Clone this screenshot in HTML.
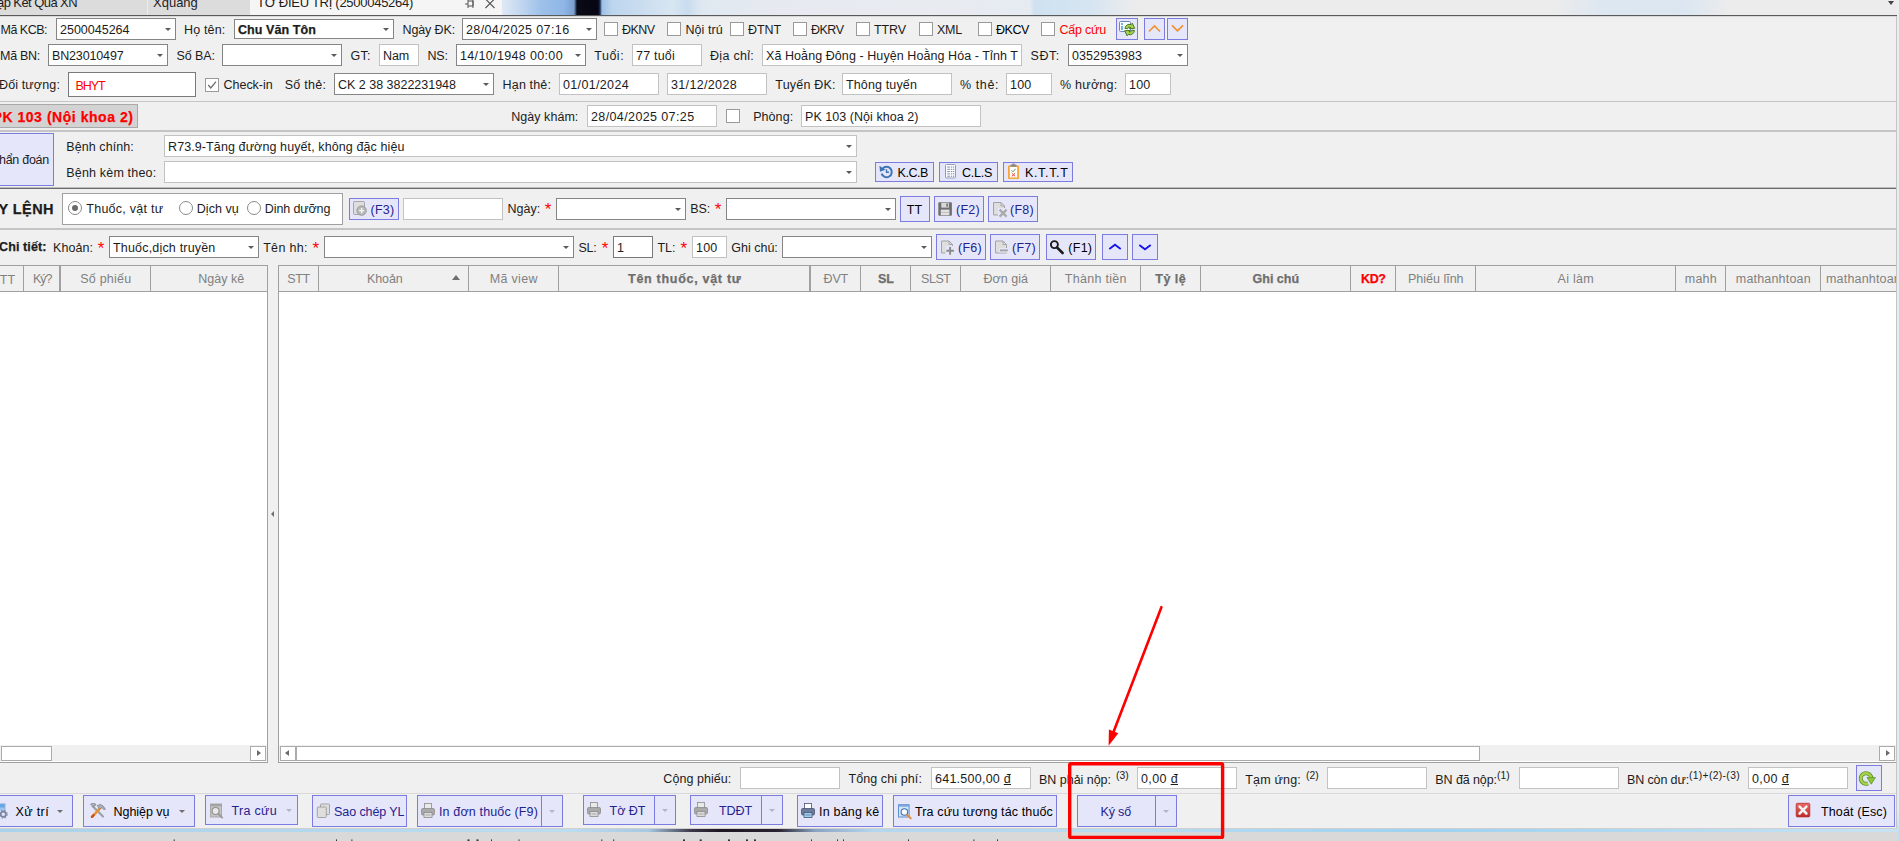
<!DOCTYPE html>
<html lang="vi"><head><meta charset="utf-8"><title>Tờ điều trị</title>
<style>
html,body{margin:0;padding:0}
body{width:1899px;height:841px;overflow:hidden;position:relative;background:#f0f0f0;font-family:"Liberation Sans",sans-serif;font-size:12.5px;color:#1c1c1c}
div,span,i,svg{position:absolute;box-sizing:content-box}
.t{line-height:16px;white-space:pre}
.cb{background:#fff;border:1px solid #858585;margin:0;width:0;height:0}
.cb,.tb,.ck,.bt,.rg,.pk,.gr,.sbt{box-sizing:border-box !important}
.cb.lt{border-color:#c2c2c2}
.tb{background:#fff;border:1px solid #c2c2c2}
.tb.dk{border-color:#7a7a7a}
.ck{background:#fff;border:1px solid #9a9a9a}
.bt{background:#e6e6fa;border:1px solid #7b7be0;box-sizing:content-box !important}
.rg{background:#fff;border:1px solid #a0a0a0;box-sizing:content-box !important}
.pk{background:#d3d3d3;border:1px solid #a9a9a9;box-sizing:content-box !important}
.gr{background:#fff;border:1px solid #a0a0a0;box-sizing:content-box !important}
.gh{background:#f0f0f0}
.sbt{background:#fff;border:1px solid #ababab;box-sizing:content-box !important}
.ar{width:0;height:0;border:3px solid transparent;border-top:3px solid #5a5a5a;border-bottom:0}
.ar.g{border-top-color:#b4b4c4}
.ar.m{border-top-color:#6e6e6e}
.rd{width:12px;height:12px;border:1px solid #8a8a8a;border-radius:50%;background:#fff}
.rd.on:after{content:"";position:absolute;left:3px;top:3px;width:6px;height:6px;border-radius:50%;background:#6a6a6a}
.tab{background:#dcdcdc}
.tab.act{background:#f5f5f5}
.ic{left:0;top:0}
#top{left:502px;top:0;width:1395px;height:15px;background:linear-gradient(90deg,#dfe9f5 0,#c3d8f0 18px,#9cc0ea 40px,#8fb6e6 62px,#7a9fd0 72px,#0a0a18 75px,#060612 96px,#1c2f5c 98px,#9fc0e6 100px,#bcd5ee 110px,#cfe0f0 150px,#d8e6f2 170px,#c9dcef 185px,#dfe8f1 200px,#e6eaf0 260px,#e8ebf0 430px,#e6ebf2 528px,#cfe1f0 532px,#d6e5f1 590px,#e9ebee 625px,#ececec 640px,#ececec 1050px,#dde7f1 1100px,#dbe6f1 1180px,#ececec 1230px)}
#bot0{left:0;top:828px;width:1897px;height:1px;background:#cfcfcf}
#bot1{left:0;top:829px;width:1897px;height:3px;background:linear-gradient(90deg,#a9d3ec 0,#bcdcf0 30%,#a6c8e2 34.2%,#3a3444 36.5%,#1c1622 38%,#2a2232 41%,#8aa4c4 43%,#b4d6ee 46%,#b9dcf2 60%,#9ed2f0 75%,#c8e2f2 100%)}
#bot2{left:0;top:832px;width:1899px;height:9px;background:#d9d9d9}
</style></head>
<body>
<div id="top"></div>
<div class="tab" style="left:0px;top:0px;width:147px;height:15px;"></div>
<div class="tab" style="left:147px;top:0px;width:103px;height:15px;border-left:1px solid #ececec;"></div>
<div class="tab act" style="left:250px;top:0px;width:252px;height:15px;"></div>
<span class="t" style="left:-3px;top:-5.5px;font-size:13px;letter-spacing:-0.573px;">ập Kết Quả XN</span>
<span class="t" style="left:153px;top:-5.5px;font-size:13px;">Xquang</span>
<span class="t" style="left:257px;top:-5.5px;font-size:13px;letter-spacing:-0.277px;">TỜ ĐIỀU TRỊ (2500045264)</span>
<svg style="position:absolute;left:463px;top:0" width="36" height="12" viewBox="0 0 36 12"><path d="M2 4h3M5 0v8M5 1h5v5h-5M10 0v8" fill="none" stroke="#555" stroke-width="1"/><path d="M22.5 -1 L31.5 8 M31.5 -1 L22.5 8" stroke="#555" stroke-width="1.1" fill="none"/></svg>
<i style="position:absolute;left:1888px;top:1px;border:3.5px solid transparent;border-top:4px solid #444;border-bottom:0;width:0;height:0"></i>
<div class="" style="left:0px;top:15px;width:1897px;height:1px;background:#5a5a5a;"></div>
<div class="" style="left:0px;top:16px;width:1897px;height:1px;background:#d8d8d8;"></div>
<span class="t" style="left:0.5px;top:21.5px;letter-spacing:-0.502px;">Mã KCB:</span>
<div class="cb" style="left:56px;top:18px;width:120px;height:22px;"></div>
<i class="ar" style="left:164.5px;top:28.0px"></i>
<span class="t" style="left:60px;top:21.5px;letter-spacing:-0.003px;">2500045264</span>
<span class="t" style="left:184px;top:21.5px;letter-spacing:0.170px;">Họ tên:</span>
<div class="cb" style="left:234px;top:19px;width:160px;height:20px;"></div>
<i class="ar" style="left:382.5px;top:28.0px"></i>
<span class="t" style="left:238px;top:21.5px;font-weight:bold;-webkit-text-stroke:.25px;letter-spacing:0.084px;">Chu Văn Tôn</span>
<span class="t" style="left:402.5px;top:21.5px;letter-spacing:-0.125px;">Ngày ĐK:</span>
<div class="cb" style="left:462px;top:18px;width:135px;height:22px;"></div>
<i class="ar" style="left:585.5px;top:28.0px"></i>
<span class="t" style="left:466px;top:21.5px;letter-spacing:0.386px;">28/04/2025 07:16</span>
<div class="ck" style="left:604px;top:22px;width:14px;height:14px;"></div>
<span class="t" style="left:622px;top:21.5px;letter-spacing:-0.559px;">ĐKNV</span>
<div class="ck" style="left:667px;top:22px;width:14px;height:14px;"></div>
<span class="t" style="left:685.4px;top:21.5px;letter-spacing:0.096px;">Nội trú</span>
<div class="ck" style="left:730px;top:22px;width:14px;height:14px;"></div>
<span class="t" style="left:748px;top:21.5px;letter-spacing:-0.082px;">ĐTNT</span>
<div class="ck" style="left:793px;top:22px;width:14px;height:14px;"></div>
<span class="t" style="left:811px;top:21.5px;letter-spacing:-0.504px;">ĐKRV</span>
<div class="ck" style="left:856px;top:22px;width:14px;height:14px;"></div>
<span class="t" style="left:874px;top:21.5px;letter-spacing:-0.105px;">TTRV</span>
<div class="ck" style="left:919px;top:22px;width:14px;height:14px;"></div>
<span class="t" style="left:937px;top:21.5px;letter-spacing:-0.234px;">XML</span>
<div class="ck" style="left:978px;top:22px;width:14px;height:14px;"></div>
<span class="t" style="left:996px;top:21.5px;color:#000;letter-spacing:-0.434px;">ĐKCV</span>
<div class="ck" style="left:1041px;top:22px;width:14px;height:14px;"></div>
<span class="t" style="left:1059.5px;top:21.5px;color:#f00;letter-spacing:-0.212px;">Cấp cứu</span>
<div class="bt" style="left:1116px;top:18px;width:20px;height:20px;"></div>
<svg style="left:1117px;top:19px" width="20" height="20" viewBox="1117 19 20 20"><rect x="1119.5" y="21.5" width="11" height="10" rx="1.2" fill="#fff" stroke="#6f88b8"/><rect x="1121" y="23" width="2" height="2" fill="#6db6e2"/><rect x="1121" y="26" width="2" height="4" fill="#6db6e2"/><path d="M1124.9 28.4 Q1126.3 23.2 1131.2 24.6 L1132.3 23.2 L1134.7 28.3 L1129.3 28.6 L1130.4 27.1 Q1128.2 26.3 1127.6 28.8 Z" fill="#a6d455" stroke="#3c6b0e" stroke-width=".9" stroke-linejoin="round"/><path d="M1124.9 28.4 Q1126.3 23.2 1131.2 24.6 L1132.3 23.2 L1134.7 28.3 L1129.3 28.6 L1130.4 27.1 Q1128.2 26.3 1127.6 28.8 Z" transform="rotate(180 1129.7 29.5)" fill="#a6d455" stroke="#3c6b0e" stroke-width=".9" stroke-linejoin="round"/></svg>
<div class="bt" style="left:1144px;top:18px;width:19px;height:20px;"><svg class="ic" width="19" height="20" viewBox="0 0 19 20"><path d="M4 12.5 L9.5 7 L15 12.5" fill="none" stroke="#f0922e" stroke-width="1.7"/></svg></div>
<div class="bt" style="left:1167px;top:18px;width:19px;height:20px;"><svg class="ic" width="19" height="20" viewBox="0 0 19 20"><path d="M4 6.3 L9.5 11.8 L15 6.3" fill="none" stroke="#f0922e" stroke-width="1.7"/></svg></div>
<span class="t" style="left:0px;top:47.5px;letter-spacing:-0.281px;">Mã BN:</span>
<div class="cb" style="left:48px;top:44px;width:120px;height:22px;"></div>
<i class="ar" style="left:156.5px;top:54.0px"></i>
<span class="t" style="left:52px;top:47.5px;letter-spacing:-0.148px;">BN23010497</span>
<span class="t" style="left:176.5px;top:47.5px;letter-spacing:-0.070px;">Số BA:</span>
<div class="cb" style="left:222px;top:44px;width:120px;height:22px;"></div>
<i class="ar" style="left:330.5px;top:54.0px"></i>
<span class="t" style="left:350.4px;top:47.5px;letter-spacing:0.349px;">GT:</span>
<div class="tb" style="left:379px;top:44px;width:40px;height:22px;"></div>
<span class="t" style="left:383px;top:47.5px;letter-spacing:-0.135px;">Nam</span>
<span class="t" style="left:427.4px;top:47.5px;letter-spacing:-0.115px;">NS:</span>
<div class="cb" style="left:456px;top:44px;width:130px;height:22px;"></div>
<i class="ar" style="left:574.5px;top:54.0px"></i>
<span class="t" style="left:460px;top:47.5px;letter-spacing:0.354px;">14/10/1948 00:00</span>
<span class="t" style="left:594.2px;top:47.5px;letter-spacing:0.534px;">Tuổi:</span>
<div class="tb" style="left:632px;top:44px;width:70px;height:22px;"></div>
<span class="t" style="left:636px;top:47.5px;letter-spacing:0.210px;">77 tuổi</span>
<span class="t" style="left:710px;top:47.5px;letter-spacing:0.289px;">Địa chỉ:</span>
<div class="tb" style="left:762px;top:44px;width:260px;height:22px;"></div>
<span class="t" style="left:766px;top:47.5px;letter-spacing:0.075px;">Xã Hoằng Đông - Huyện Hoằng Hóa - Tỉnh T</span>
<span class="t" style="left:1030.6px;top:47.5px;letter-spacing:0.477px;">SĐT:</span>
<div class="cb" style="left:1068px;top:44px;width:120px;height:22px;"></div>
<i class="ar" style="left:1176.5px;top:54.0px"></i>
<span class="t" style="left:1072px;top:47.5px;letter-spacing:0.047px;">0352953983</span>
<span class="t" style="left:-1px;top:77.0px;letter-spacing:0.134px;">Đối tượng:</span>
<div class="tb dk" style="left:68px;top:72px;width:128px;height:25px;"></div>
<span class="t" style="left:75.5px;top:78.0px;color:#f00;letter-spacing:-1.086px;">BHYT</span>
<div class="ck" style="left:205px;top:78px;width:14px;height:14px;"><svg width="12" height="12" viewBox="0 0 12 12" style="position:absolute;left:0;top:0"><path d="M2.2 6 L4.8 9 L10 2.6" fill="none" stroke="#6e6e6e" stroke-width="1.3"/></svg></div>
<span class="t" style="left:223.6px;top:77.0px;letter-spacing:-0.041px;">Check-in</span>
<span class="t" style="left:284.7px;top:77.0px;letter-spacing:0.268px;">Số thẻ:</span>
<div class="cb" style="left:334px;top:73px;width:160px;height:22px;"></div>
<i class="ar" style="left:482.5px;top:83.0px"></i>
<span class="t" style="left:338px;top:76.5px;letter-spacing:-0.010px;">CK 2 38 3822231948</span>
<span class="t" style="left:502.6px;top:77.0px;letter-spacing:0.154px;">Hạn thẻ:</span>
<div class="tb" style="left:559px;top:73px;width:100px;height:22px;"></div>
<span class="t" style="left:563px;top:76.5px;letter-spacing:0.344px;">01/01/2024</span>
<div class="tb" style="left:667px;top:73px;width:100px;height:22px;"></div>
<span class="t" style="left:671px;top:76.5px;letter-spacing:0.344px;">31/12/2028</span>
<span class="t" style="left:775.3px;top:77.0px;letter-spacing:0.212px;">Tuyến ĐK:</span>
<div class="tb" style="left:842px;top:73px;width:110px;height:22px;"></div>
<span class="t" style="left:846px;top:76.5px;letter-spacing:0.136px;">Thông tuyến</span>
<span class="t" style="left:960px;top:77.0px;letter-spacing:0.594px;">% thẻ:</span>
<div class="tb" style="left:1006px;top:73px;width:46px;height:22px;"></div>
<span class="t" style="left:1010px;top:76.5px;letter-spacing:0.214px;">100</span>
<span class="t" style="left:1060px;top:77.0px;letter-spacing:0.252px;">% hưởng:</span>
<div class="tb" style="left:1125px;top:73px;width:46px;height:22px;"></div>
<span class="t" style="left:1129px;top:76.5px;letter-spacing:0.214px;">100</span>
<div class="" style="left:0px;top:101px;width:1897px;height:1px;background:#c6c6c6;"></div>
<div class="pk" style="left:-1px;top:104px;width:137px;height:22px;"></div>
<span class="t" style="left:-7.5px;top:108.5px;color:#f00;font-weight:bold;-webkit-text-stroke:.25px;font-size:14px;letter-spacing:0.542px;">PK 103 (Nội khoa 2)</span>
<span class="t" style="left:511.2px;top:109.0px;letter-spacing:0.050px;">Ngày khám:</span>
<div class="tb" style="left:587px;top:105px;width:130px;height:22px;"></div>
<span class="t" style="left:591px;top:108.5px;letter-spacing:0.386px;">28/04/2025 07:25</span>
<div class="ck" style="left:726px;top:109px;width:14px;height:14px;"></div>
<span class="t" style="left:753.2px;top:109.0px;letter-spacing:0.062px;">Phòng:</span>
<div class="tb" style="left:801px;top:105px;width:180px;height:22px;"></div>
<span class="t" style="left:805px;top:108.5px;letter-spacing:0.049px;">PK 103 (Nội khoa 2)</span>
<div class="" style="left:0px;top:130px;width:1897px;height:2px;background:#c4c4c4;"></div>
<div class="bt" style="left:-1px;top:133px;width:53px;height:51px;"></div>
<span class="t" style="left:-1px;top:152.0px;letter-spacing:-0.268px;">hẩn đoán</span>
<span class="t" style="left:66.3px;top:138.5px;letter-spacing:0.071px;">Bệnh chính:</span>
<div class="cb lt" style="left:164px;top:135px;width:693px;height:22px;"></div>
<i class="ar" style="left:845.5px;top:145.0px"></i>
<span class="t" style="left:168px;top:138.5px;letter-spacing:0.100px;">R73.9-Tăng đường huyết, không đặc hiệu</span>
<span class="t" style="left:66.3px;top:165.0px;letter-spacing:0.174px;">Bệnh kèm theo:</span>
<div class="cb lt" style="left:164px;top:161px;width:693px;height:22px;"></div>
<i class="ar" style="left:845.5px;top:171.0px"></i>
<div class="bt" style="left:875px;top:162px;width:57px;height:18px;"></div>
<svg style="left:879px;top:164px" width="16" height="16" viewBox="879 164 16 16"><path d="M882.3 169 A5.2 5.2 0 1 1 881.6 173.6" fill="none" stroke="#3f73b3" stroke-width="2"/><path d="M879.4 165.8 L880 171.8 L885.4 169.8 Z" fill="#3f73b3"/><path d="M886.5 169.2 V172.3 H889" fill="none" stroke="#3f73b3" stroke-width="1.4"/></svg>
<span class="t" style="left:897.5px;top:164.5px;color:#000;letter-spacing:-0.431px;">K.C.B</span>
<div class="bt" style="left:939px;top:162px;width:57px;height:18px;"></div>
<svg style="left:944px;top:163px" width="14" height="17" viewBox="944 163 14 17"><rect x="945.5" y="164.5" width="10" height="13.5" rx="1" fill="#fff" stroke="#8f9ab8"/><rect x="947.2" y="166.5" width="3" height="1" fill="#7d8fb5"/><rect x="951.2" y="166.5" width="1" height="1" fill="#3b62c0"/><rect x="953.2" y="166.5" width="1" height="1" fill="#3b62c0"/><rect x="947.2" y="168.8" width="3" height="1" fill="#7d8fb5"/><rect x="951.2" y="168.8" width="1" height="1" fill="#3b62c0"/><rect x="953.2" y="168.8" width="1" height="1" fill="#3b62c0"/><rect x="947.2" y="171.1" width="3" height="1" fill="#7d8fb5"/><rect x="951.2" y="171.1" width="1" height="1" fill="#3b62c0"/><rect x="953.2" y="171.1" width="1" height="1" fill="#3b62c0"/><rect x="947.2" y="173.4" width="3" height="1" fill="#7d8fb5"/><rect x="951.2" y="173.4" width="1" height="1" fill="#3b62c0"/><rect x="953.2" y="173.4" width="1" height="1" fill="#3b62c0"/><rect x="947.2" y="175.7" width="3" height="1" fill="#7d8fb5"/><rect x="951.2" y="175.7" width="1" height="1" fill="#3b62c0"/><rect x="953.2" y="175.7" width="1" height="1" fill="#3b62c0"/></svg>
<span class="t" style="left:962px;top:164.5px;color:#000;letter-spacing:-0.253px;">C.L.S</span>
<div class="bt" style="left:1003px;top:162px;width:68px;height:18px;"></div>
<svg style="left:1007px;top:163px" width="14" height="17" viewBox="1007 163 14 17"><rect x="1008" y="165.5" width="11" height="13.5" rx=".8" fill="#f2a63c"/><rect x="1009.8" y="167" width="7.4" height="10.5" fill="#fff"/><rect x="1010.5" y="164.5" width="6" height="2.3" rx=".6" fill="#8a8a8a"/><rect x="1012.3" y="163.6" width="2.4" height="1.6" fill="#8a8a8a"/><path d="M1011.5 170.3 L1013 171.8 L1015.6 168.8" fill="none" stroke="#5aa05a" stroke-width="1"/><path d="M1011.8 173.2 L1015.2 176.4 M1015.2 173.2 L1011.8 176.4" stroke="#e0453a" stroke-width="1"/></svg>
<span class="t" style="left:1025px;top:164.5px;color:#000;letter-spacing:0.656px;">K.T.T.T</span>
<div class="" style="left:0px;top:187px;width:1897px;height:1px;background:#bdbdbd;"></div>
<div class="" style="left:0px;top:188px;width:1897px;height:1px;background:#6a6a6a;"></div>
<span class="t" style="left:-1.5px;top:201.0px;font-weight:bold;-webkit-text-stroke:.25px;font-size:14.5px;letter-spacing:0.430px;">Y LỆNH</span>
<div class="rg" style="left:62px;top:193px;width:279px;height:30px;"></div>
<i class="rd on" style="left:68px;top:201px"></i>
<span class="t" style="left:86.3px;top:200.8px;letter-spacing:0.255px;">Thuốc, vật tư</span>
<i class="rd" style="left:178.5px;top:201px"></i>
<span class="t" style="left:196.8px;top:200.8px;letter-spacing:0.045px;">Dịch vụ</span>
<i class="rd" style="left:246.7px;top:201px"></i>
<span class="t" style="left:264.8px;top:200.8px;letter-spacing:-0.111px;">Dinh dưỡng</span>
<div class="bt" style="left:349px;top:198px;width:48px;height:20px;"></div>
<svg style="left:352px;top:200px" width="16" height="18" viewBox="352 200 16 18"><rect x="353.5" y="201.5" width="11" height="13" rx=".8" fill="#dedede" stroke="#a6a6a6"/><circle cx="361.6" cy="210.6" r="4.7" fill="#b9b9b9" stroke="#999" stroke-width="1"/><path d="M359 210.6 H364.2 M361.6 208 V213.2" stroke="#f4f4f4" stroke-width="1.4"/></svg>
<span class="t" style="left:370.5px;top:201.5px;color:#23238e;letter-spacing:0.270px;">(F3)</span>
<div class="tb" style="left:403px;top:198px;width:100px;height:22px;"></div>
<span class="t" style="left:507.4px;top:200.8px;letter-spacing:0.069px;">Ngày:</span>
<span class="t" style="left:544.7px;top:202.1px;color:#f00;font-size:17px;">*</span>
<div class="cb" style="left:556px;top:198px;width:130px;height:22px;"></div>
<i class="ar" style="left:674.5px;top:208.0px"></i>
<span class="t" style="left:690.3px;top:200.8px;letter-spacing:-0.052px;">BS:</span>
<span class="t" style="left:714.7px;top:202.1px;color:#f00;font-size:17px;">*</span>
<div class="cb" style="left:726px;top:198px;width:170px;height:22px;"></div>
<i class="ar" style="left:884.5px;top:208.0px"></i>
<div class="bt" style="left:900px;top:196px;width:28px;height:24px;"></div>
<span class="t" style="left:906.7px;top:201.5px;color:#000;letter-spacing:0.109px;">TT</span>
<div class="bt" style="left:934px;top:196px;width:48px;height:24px;"></div>
<svg style="left:937px;top:201px" width="16" height="16" viewBox="937 201 16 16"><rect x="938.3" y="202.3" width="13.6" height="13.4" rx="1" fill="#6f6f6f"/><rect x="941.3" y="202.8" width="7.6" height="4.8" fill="#d9d9d9"/><rect x="946.3" y="203.5" width="1.6" height="3.2" fill="#6f6f6f"/><rect x="940.8" y="209.6" width="8.6" height="5.6" fill="#e1e1e1"/><rect x="940.8" y="212" width="8.6" height=".9" fill="#bdbdbd"/></svg>
<span class="t" style="left:956px;top:201.5px;color:#23238e;letter-spacing:0.270px;">(F2)</span>
<div class="bt" style="left:988px;top:196px;width:48px;height:24px;"></div>
<svg style="left:992px;top:201px" width="17" height="18" viewBox="992 201 17 18"><path d="M993.5 202.5 H1001.0 L1004.5 206.0 V215.0 H993.5 Z" fill="#dedede" stroke="#a3a3a3" stroke-width="1"/><path d="M1001.0 202.5 V206.0 H1004.5" fill="none" stroke="#a3a3a3" stroke-width=".9"/><rect x="998" y="208" width="10" height="10" fill="#e6e6fa"/><path d="M999.6 209.6 L1006.6 216.6 M1006.6 209.6 L999.6 216.6" stroke="#a9a9a9" stroke-width="2.2"/></svg>
<span class="t" style="left:1010px;top:201.5px;color:#23238e;letter-spacing:0.270px;">(F8)</span>
<div class="" style="left:0px;top:228px;width:1897px;height:2px;background:#c4c4c4;"></div>
<span class="t" style="left:-1px;top:239.0px;font-weight:bold;-webkit-text-stroke:.25px;letter-spacing:0.108px;">Chi tiết:</span>
<span class="t" style="left:53px;top:239.5px;letter-spacing:0.062px;">Khoản:</span>
<span class="t" style="left:97.7px;top:241.3px;color:#f00;font-size:17px;">*</span>
<div class="cb" style="left:109px;top:236px;width:150px;height:22px;"></div>
<i class="ar" style="left:247.5px;top:246.0px"></i>
<span class="t" style="left:113px;top:239.5px;letter-spacing:0.185px;">Thuốc,dịch truyền</span>
<span class="t" style="left:263.2px;top:239.5px;letter-spacing:0.301px;">Tên hh:</span>
<span class="t" style="left:312.5px;top:241.3px;color:#f00;font-size:17px;">*</span>
<div class="cb" style="left:324px;top:236px;width:250px;height:22px;"></div>
<i class="ar" style="left:562.5px;top:246.0px"></i>
<span class="t" style="left:578.4px;top:239.5px;letter-spacing:-0.255px;">SL:</span>
<span class="t" style="left:601.8px;top:241.3px;color:#f00;font-size:17px;">*</span>
<div class="tb dk" style="left:613px;top:236px;width:40px;height:22px;"></div>
<span class="t" style="left:617px;top:239.5px;">1</span>
<span class="t" style="left:657.4px;top:239.5px;letter-spacing:-0.021px;">TL:</span>
<span class="t" style="left:680.5px;top:241.3px;color:#f00;font-size:17px;">*</span>
<div class="tb" style="left:692px;top:236px;width:35px;height:22px;"></div>
<span class="t" style="left:696px;top:239.5px;letter-spacing:0.214px;">100</span>
<span class="t" style="left:731.3px;top:239.5px;letter-spacing:-0.008px;">Ghi chú:</span>
<div class="cb" style="left:782px;top:236px;width:150px;height:22px;"></div>
<i class="ar" style="left:920.5px;top:246.0px"></i>
<div class="bt" style="left:936px;top:234px;width:48px;height:24px;"></div>
<svg style="left:940px;top:239px" width="16" height="18" viewBox="940 239 16 18"><path d="M941.5 241 H949.0 L952.5 244.5 V253 H941.5 Z" fill="#dedede" stroke="#a3a3a3" stroke-width="1"/><path d="M949.0 241 V244.5 H952.5" fill="none" stroke="#a3a3a3" stroke-width=".9"/><rect x="945.4" y="246" width="9.5" height="9.5" fill="#e6e6fa"/><path d="M946.3 250.8 H953.9 M950.1 247 V254.7" stroke="#8c8c8c" stroke-width="1.9"/></svg>
<span class="t" style="left:958px;top:239.5px;color:#23238e;letter-spacing:0.270px;">(F6)</span>
<div class="bt" style="left:990px;top:234px;width:48px;height:24px;"></div>
<svg style="left:994px;top:239px" width="16" height="18" viewBox="994 239 16 18"><path d="M995.5 241 H1003.0 L1006.5 244.5 V253 H995.5 Z" fill="#dedede" stroke="#a3a3a3" stroke-width="1"/><path d="M1003.0 241 V244.5 H1006.5" fill="none" stroke="#a3a3a3" stroke-width=".9"/><rect x="999" y="248" width="9.5" height="4.5" fill="#e6e6fa"/><path d="M999.9 250.4 H1007.8" stroke="#a3a3a3" stroke-width="1.9"/></svg>
<span class="t" style="left:1012px;top:239.5px;color:#23238e;letter-spacing:0.270px;">(F7)</span>
<div class="bt" style="left:1046px;top:234px;width:48px;height:24px;"></div>
<svg style="left:1049px;top:239px" width="17" height="17" viewBox="1049 239 17 17"><circle cx="1054.4" cy="244.6" r="3.5" fill="#e6e6fa" stroke="#1a1a1a" stroke-width="1.9"/><path d="M1057.2 247.6 L1062.6 253" stroke="#1a1a1a" stroke-width="2.6" stroke-linecap="round"/></svg>
<span class="t" style="left:1068.3px;top:239.5px;color:#000;letter-spacing:0.270px;">(F1)</span>
<div class="bt" style="left:1102px;top:234px;width:24px;height:24px;"><svg class="ic" width="24" height="24" viewBox="0 0 24 24"><path d="M6.3 14 L12 9.7 L17.7 14" fill="none" stroke="#1414e6" stroke-width="1.8"/></svg></div>
<div class="bt" style="left:1132px;top:234px;width:24px;height:24px;"><svg class="ic" width="24" height="24" viewBox="0 0 24 24"><path d="M6.3 10 L12 14.3 L17.7 10" fill="none" stroke="#1414e6" stroke-width="1.8"/></svg></div>
<div class="gr" style="left:-1px;top:265px;width:267px;height:496px;"></div>
<div class="gh" style="left:0px;top:266px;width:267px;height:25px;"></div>
<div class="" style="left:0px;top:291px;width:267px;height:1px;background:#a0a0a0;"></div>
<div class="" style="left:23px;top:266px;width:1px;height:25px;background:#a0a0a0;"></div>
<span class="t" style="left:11.8px;top:271.0px;color:#808080;transform:translateX(-50%);"></span>
<div class="" style="left:60px;top:266px;width:1px;height:25px;background:#a0a0a0;"></div>
<div class="" style="left:59px;top:266px;width:1px;height:25px;background:#a0a0a0;"></div>
<span class="t" style="left:42.3px;top:271.0px;color:#808080;transform:translateX(-50%);letter-spacing:-1.016px;">Ký?</span>
<div class="" style="left:150px;top:266px;width:1px;height:25px;background:#a0a0a0;"></div>
<span class="t" style="left:105.8px;top:271.0px;color:#808080;transform:translateX(-50%);letter-spacing:0.205px;">Số phiếu</span>
<div class="" style="left:267px;top:266px;width:1px;height:25px;background:#a0a0a0;"></div>
<span class="t" style="left:221.3px;top:271.0px;color:#808080;transform:translateX(-50%);letter-spacing:0.020px;">Ngày kê</span>
<span class="t" style="left:-0.2px;top:271.5px;color:#808080;letter-spacing:0.109px;">TT</span>
<div class="gr" style="left:278px;top:265px;width:1617px;height:496px;"></div>
<div class="gh" style="left:279px;top:266px;width:1617px;height:25px;"></div>
<div class="" style="left:279px;top:291px;width:1617px;height:1px;background:#a0a0a0;"></div>
<div class="" style="left:318px;top:266px;width:1px;height:25px;background:#a0a0a0;"></div>
<span class="t" style="left:287.3px;top:271.0px;color:#808080;letter-spacing:-0.370px;">STT</span>
<div class="" style="left:468px;top:266px;width:1px;height:25px;background:#a0a0a0;"></div>
<span class="t" style="left:384.8px;top:271.0px;color:#808080;transform:translateX(-50%);letter-spacing:-0.131px;">Khoản</span>
<div class="" style="left:558px;top:266px;width:1px;height:25px;background:#a0a0a0;"></div>
<span class="t" style="left:513.8px;top:271.0px;color:#808080;transform:translateX(-50%);letter-spacing:0.308px;">Mã view</span>
<div class="" style="left:810px;top:266px;width:1px;height:25px;background:#a0a0a0;"></div>
<div class="" style="left:809px;top:266px;width:1px;height:25px;background:#a0a0a0;"></div>
<span class="t" style="left:684.8px;top:271.0px;color:#6e6e6e;font-weight:bold;-webkit-text-stroke:.25px;transform:translateX(-50%);letter-spacing:0.710px;">Tên thuốc, vật tư</span>
<div class="" style="left:860px;top:266px;width:1px;height:25px;background:#a0a0a0;"></div>
<span class="t" style="left:835.8px;top:271.0px;color:#808080;transform:translateX(-50%);letter-spacing:-0.167px;">ĐVT</span>
<div class="" style="left:910px;top:266px;width:1px;height:25px;background:#a0a0a0;"></div>
<span class="t" style="left:885.8px;top:271.0px;color:#6e6e6e;font-weight:bold;-webkit-text-stroke:.25px;transform:translateX(-50%);letter-spacing:-0.242px;">SL</span>
<div class="" style="left:960px;top:266px;width:1px;height:25px;background:#a0a0a0;"></div>
<span class="t" style="left:935.8px;top:271.0px;color:#808080;transform:translateX(-50%);letter-spacing:-0.441px;">SLST</span>
<div class="" style="left:1050px;top:266px;width:1px;height:25px;background:#a0a0a0;"></div>
<span class="t" style="left:1005.8px;top:271.0px;color:#808080;transform:translateX(-50%);letter-spacing:0.022px;">Đơn giá</span>
<div class="" style="left:1140px;top:266px;width:1px;height:25px;background:#a0a0a0;"></div>
<span class="t" style="left:1095.8px;top:271.0px;color:#808080;transform:translateX(-50%);letter-spacing:0.292px;">Thành tiền</span>
<div class="" style="left:1200px;top:266px;width:1px;height:25px;background:#a0a0a0;"></div>
<span class="t" style="left:1170.8px;top:271.0px;color:#6e6e6e;font-weight:bold;-webkit-text-stroke:.25px;transform:translateX(-50%);letter-spacing:0.500px;">Tỷ lệ</span>
<div class="" style="left:1350px;top:266px;width:1px;height:25px;background:#a0a0a0;"></div>
<span class="t" style="left:1275.8px;top:271.0px;color:#6e6e6e;font-weight:bold;-webkit-text-stroke:.25px;transform:translateX(-50%);letter-spacing:-0.004px;">Ghi chú</span>
<div class="" style="left:1395px;top:266px;width:1px;height:25px;background:#a0a0a0;"></div>
<span class="t" style="left:1373.3px;top:271.0px;color:#f00;font-weight:bold;-webkit-text-stroke:.25px;transform:translateX(-50%);letter-spacing:-0.401px;">KD?</span>
<div class="" style="left:1475px;top:266px;width:1px;height:25px;background:#a0a0a0;"></div>
<span class="t" style="left:1435.8px;top:271.0px;color:#808080;transform:translateX(-50%);letter-spacing:-0.011px;">Phiếu lĩnh</span>
<div class="" style="left:1675px;top:266px;width:1px;height:25px;background:#a0a0a0;"></div>
<span class="t" style="left:1575.8px;top:271.0px;color:#808080;transform:translateX(-50%);letter-spacing:0.294px;">Ai làm</span>
<div class="" style="left:1725px;top:266px;width:1px;height:25px;background:#a0a0a0;"></div>
<span class="t" style="left:1700.8px;top:271.0px;color:#808080;transform:translateX(-50%);letter-spacing:0.180px;">mahh</span>
<div class="" style="left:1820px;top:266px;width:1px;height:25px;background:#a0a0a0;"></div>
<span class="t" style="left:1773.3px;top:271.0px;color:#808080;transform:translateX(-50%);letter-spacing:0.183px;">mathanhtoan</span>
<div class="" style="left:1897px;top:266px;width:1px;height:25px;background:#a0a0a0;"></div>
<span class="t" style="left:1826px;top:271.0px;color:#808080;letter-spacing:0.183px;">mathanhtoan</span>
<i style="position:absolute;left:452px;top:275px;border:4.8px solid transparent;border-bottom:5px solid #6e6e6e;border-top:0;width:0;height:0"></i>
<i style="position:absolute;left:271px;top:511px;border:3px solid transparent;border-right:3.5px solid #6e6e6e;border-left:0;width:0;height:0"></i>
<div class="" style="left:0px;top:745px;width:267px;height:16px;background:#f0f0f0;"></div>
<div class="sbt" style="left:1px;top:746px;width:49px;height:13px;"></div>
<div class="sbt" style="left:250px;top:746px;width:14px;height:13px;"><i style="position:absolute;left:6px;top:3px;border:3.5px solid transparent;border-left:4px solid #6a6a6a;border-right:0;width:0;height:0"></i></div>
<div class="" style="left:279px;top:745px;width:1617px;height:16px;background:#f0f0f0;"></div>
<div class="sbt" style="left:280px;top:746px;width:14px;height:13px;"><i style="position:absolute;left:4px;top:3px;border:3.5px solid transparent;border-right:4px solid #6a6a6a;border-left:0;width:0;height:0"></i></div>
<div class="sbt" style="left:296px;top:746px;width:1182px;height:13px;"></div>
<div class="sbt" style="left:1879px;top:746px;width:14px;height:13px;"><i style="position:absolute;left:6px;top:3px;border:3.5px solid transparent;border-left:4px solid #6a6a6a;border-right:0;width:0;height:0"></i></div>
<span class="t" style="left:663.3px;top:771.0px;letter-spacing:0.053px;">Cộng phiếu:</span>
<div class="tb" style="left:740px;top:767px;width:100px;height:22px;"></div>
<span class="t" style="left:848.4px;top:771.0px;letter-spacing:0.103px;">Tổng chi phí:</span>
<div class="tb" style="left:931px;top:767px;width:100px;height:22px;"></div>
<span class="t" style="left:935px;top:770.5px;letter-spacing:0.250px;">641.500,00 <u>đ</u></span>
<span class="t" style="left:1039px;top:771.5px;letter-spacing:-0.023px;">BN phải nộp:</span>
<span class="t" style="left:1116px;top:767.5px;font-size:10.3px;">(3)</span>
<div class="tb" style="left:1137px;top:767px;width:100px;height:22px;"></div>
<span class="t" style="left:1141px;top:770.5px;letter-spacing:0.372px;">0,00 <u>đ</u></span>
<span class="t" style="left:1245.3px;top:771.5px;letter-spacing:0.185px;">Tạm ứng:</span>
<span class="t" style="left:1306px;top:767.5px;font-size:10.3px;">(2)</span>
<div class="tb" style="left:1327px;top:767px;width:100px;height:22px;"></div>
<span class="t" style="left:1435.3px;top:771.5px;letter-spacing:-0.085px;">BN đã nộp:</span>
<span class="t" style="left:1497px;top:767.5px;font-size:10.3px;">(1)</span>
<div class="tb" style="left:1519px;top:767px;width:100px;height:22px;"></div>
<span class="t" style="left:1627px;top:771.5px;letter-spacing:-0.127px;">BN còn dư:</span>
<span class="t" style="left:1689px;top:767.5px;font-size:10.3px;letter-spacing:0.345px;">(1)+(2)-(3)</span>
<div class="tb" style="left:1748px;top:767px;width:100px;height:22px;"></div>
<span class="t" style="left:1752px;top:770.5px;letter-spacing:0.372px;">0,00 <u>đ</u></span>
<div class="bt" style="left:1856px;top:765px;width:24px;height:24px;"></div>
<svg style="left:1857px;top:768px" width="20" height="20" viewBox="1857 768 20 20"><path d="M1871.3 778.6 A5.3 5.3 0 1 0 1868 783.4" fill="none" stroke="#5e9420" stroke-width="4"/><path d="M1871.3 778.6 A5.3 5.3 0 1 0 1868 783.4" fill="none" stroke="#a5d24f" stroke-width="2.4"/><path d="M1867 777.6 H1875.4 L1871.2 784.2 Z" fill="#8cc63f" stroke="#5e9420" stroke-width=".8"/></svg>
<div class="" style="left:0px;top:793px;width:1897px;height:1px;background:#d9d9d9;"></div>
<div class="bt" style="left:-1px;top:795px;width:72px;height:30px;"></div>
<svg style="left:0px;top:802px" width="9" height="17" viewBox="0 802 9 17"><rect x="-4" y="803.4" width="9.3" height="7" fill="#6aa6e6" stroke="#b9cde6" stroke-width="1"/><rect x="-4" y="807.5" width="8.6" height="2.6" fill="#9cc4ef"/><circle cx="3.3" cy="814.3" r="2.6" fill="none" stroke="#77849f" stroke-width="1.7"/><circle cx="3.3" cy="814.3" r="3.9" fill="none" stroke="#77849f" stroke-width="1.1" stroke-dasharray="1.5 1.6"/></svg>
<span class="t" style="left:15.5px;top:803.5px;color:#000;letter-spacing:0.367px;">Xử trí</span>
<i class="ar m" style="left:57px;top:810px"></i>
<div class="bt" style="left:83px;top:795px;width:110px;height:30px;"></div>
<svg style="left:89px;top:803px" width="18" height="16" viewBox="89 803 18 16"><path d="M92.5 806 L103 816.5" stroke="#9aa0a8" stroke-width="2.2" stroke-linecap="round"/><path d="M90.6 805.2 A3 3 0 0 1 95.4 804.6 L93.4 806.4 L94.2 807.6" fill="none" stroke="#8d939b" stroke-width="1.4"/><path d="M92 816.8 L100 808.4" stroke="#e8912d" stroke-width="2.4" stroke-linecap="round"/><path d="M92 816.8 L93.6 815.2" stroke="#c8541c" stroke-width="2.4" stroke-linecap="round"/><path d="M97.2 805.6 L100.2 804.4 Q103.5 805.2 105.4 809.2 L103.8 809.6 Q102.6 807.6 101 807.8 L99.6 809.2 Z" fill="#aab0b8" stroke="#777c84" stroke-width=".7"/></svg>
<span class="t" style="left:113.5px;top:803.5px;color:#000;letter-spacing:-0.033px;">Nghiệp vụ</span>
<i class="ar m" style="left:179px;top:810px"></i>
<div class="bt" style="left:205px;top:795px;width:91px;height:28px;"></div>
<svg style="left:209px;top:802px" width="16" height="18" viewBox="209 802 16 18"><rect x="210.5" y="804" width="11" height="13" fill="#c4c4c4" stroke="#a9a9a9"/><rect x="210.5" y="804" width="11" height="2.2" fill="#a3a3a3"/><circle cx="215.6" cy="811" r="3.5" fill="#e9e9e9" stroke="#8f8f8f" stroke-width="1.1"/><path d="M218.3 813.8 L222.2 817.6" stroke="#9a9a9a" stroke-width="1.9" stroke-linecap="round"/></svg>
<span class="t" style="left:231.5px;top:802.5px;color:#23238e;letter-spacing:0.308px;">Tra cứu</span>
<i class="ar g" style="left:286px;top:809px"></i>
<div class="bt" style="left:312px;top:795px;width:93px;height:30px;"></div>
<svg style="left:316px;top:803px" width="15" height="16" viewBox="316 803 15 16"><rect x="320.5" y="804" width="9" height="10.5" rx=".8" fill="#dedede" stroke="#a3a3a3"/><rect x="317.3" y="807" width="9" height="10.5" rx=".8" fill="#dedede" stroke="#a3a3a3"/></svg>
<span class="t" style="left:334px;top:803.5px;color:#23238e;letter-spacing:-0.078px;">Sao chép YL</span>
<div class="bt" style="left:417px;top:795px;width:144px;height:30px;"></div>
<div class="" style="left:541px;top:796px;width:1px;height:30px;background:#7b7be0;"></div>
<i class="ar g" style="left:548.5px;top:810.0px"></i>
<svg style="left:420.6px;top:803px" width="15" height="16" viewBox="420.6 803 15 16"><rect x="424.1" y="803.5" width="7" height="6" fill="#e9e9e9" stroke="#8c8c8c" stroke-width=".8"/><rect x="421.1" y="808.5" width="13" height="6.5" rx="1.3" fill="#a9a9a9" stroke="#8c8c8c" stroke-width=".8"/><rect x="423.6" y="812.5" width="8" height="5" fill="#dcdcdc" stroke="#8c8c8c" stroke-width=".8"/><rect x="425.1" y="814.5" width="5" height="1" fill="#8c8c8c" opacity=".6"/></svg>
<span class="t" style="left:439px;top:803.5px;color:#23238e;letter-spacing:0.151px;">In đơn thuốc (F9)</span>
<div class="bt" style="left:583px;top:795px;width:91px;height:28px;"></div>
<div class="" style="left:654px;top:796px;width:1px;height:28px;background:#7b7be0;"></div>
<i class="ar g" style="left:661.5px;top:809.0px"></i>
<svg style="left:586.8px;top:802px" width="15" height="16" viewBox="586.8 802 15 16"><rect x="590.3" y="802.5" width="7" height="6" fill="#e9e9e9" stroke="#8c8c8c" stroke-width=".8"/><rect x="587.3" y="807.5" width="13" height="6.5" rx="1.3" fill="#a9a9a9" stroke="#8c8c8c" stroke-width=".8"/><rect x="589.8" y="811.5" width="8" height="5" fill="#dcdcdc" stroke="#8c8c8c" stroke-width=".8"/><rect x="591.3" y="813.5" width="5" height="1" fill="#8c8c8c" opacity=".6"/></svg>
<span class="t" style="left:609.5px;top:802.5px;color:#23238e;letter-spacing:0.006px;">Tờ ĐT</span>
<div class="bt" style="left:690px;top:795px;width:91px;height:28px;"></div>
<div class="" style="left:761px;top:796px;width:1px;height:28px;background:#7b7be0;"></div>
<i class="ar g" style="left:768.5px;top:809.0px"></i>
<svg style="left:693.8px;top:802px" width="15" height="16" viewBox="693.8 802 15 16"><rect x="697.3" y="802.5" width="7" height="6" fill="#e9e9e9" stroke="#8c8c8c" stroke-width=".8"/><rect x="694.3" y="807.5" width="13" height="6.5" rx="1.3" fill="#a9a9a9" stroke="#8c8c8c" stroke-width=".8"/><rect x="696.8" y="811.5" width="8" height="5" fill="#dcdcdc" stroke="#8c8c8c" stroke-width=".8"/><rect x="698.3" y="813.5" width="5" height="1" fill="#8c8c8c" opacity=".6"/></svg>
<span class="t" style="left:719px;top:802.5px;color:#23238e;letter-spacing:-0.082px;">TDĐT</span>
<div class="bt" style="left:797px;top:795px;width:84px;height:30px;"></div>
<svg style="left:801.2px;top:803px" width="15" height="16" viewBox="801.2 803 15 16"><rect x="804.7" y="803.5" width="7" height="6" fill="#ffffff" stroke="#46546f" stroke-width=".8"/><rect x="801.7" y="808.5" width="13" height="6.5" rx="1.3" fill="#6d7c9c" stroke="#46546f" stroke-width=".8"/><rect x="804.2" y="812.5" width="8" height="5" fill="#9fd0f4" stroke="#46546f" stroke-width=".8"/><rect x="805.7" y="814.5" width="5" height="1" fill="#46546f" opacity=".6"/></svg>
<span class="t" style="left:819px;top:803.5px;color:#000;letter-spacing:0.211px;">In bảng kê</span>
<div class="bt" style="left:893px;top:795px;width:162px;height:30px;"></div>
<svg style="left:897px;top:803px" width="16" height="17" viewBox="897 803 16 17"><rect x="898.5" y="804.7" width="10.6" height="12.3" fill="#d6e6fa" stroke="#5b8fd0"/><rect x="898.5" y="804.7" width="10.6" height="2" fill="#7aa6dc"/><circle cx="904.4" cy="812" r="3.3" fill="#f4f9ff" stroke="#3e6fb0" stroke-width="1.1"/><path d="M907 814.8 L910.8 818.4" stroke="#e08a3a" stroke-width="1.9" stroke-linecap="round"/></svg>
<span class="t" style="left:915px;top:803.5px;color:#000;letter-spacing:0.132px;">Tra cứu tương tác thuốc</span>
<div class="bt" style="left:1077px;top:795px;width:98px;height:30px;"></div>
<div class="" style="left:1155px;top:796px;width:1px;height:30px;background:#7b7be0;"></div>
<i class="ar g" style="left:1162.5px;top:810.0px"></i>
<span class="t" style="left:1100.5px;top:803.5px;color:#23238e;letter-spacing:-0.153px;">Ký số</span>
<div class="bt" style="left:1788px;top:795px;width:105px;height:30px;"></div>
<svg style="left:1795px;top:802px" width="16" height="16" viewBox="1795 802 16 16"><defs><linearGradient id="rg1" x1="0" y1="0" x2="0" y2="1"><stop offset="0" stop-color="#ec6a63"/><stop offset="1" stop-color="#bf2a2a"/></linearGradient></defs><rect x="1796.2" y="803.3" width="13.6" height="13.6" rx="1.2" fill="url(#rg1)" stroke="#b53030" stroke-width=".8"/><path d="M1799.6 806.7 L1806.4 813.5 M1806.4 806.7 L1799.6 813.5" stroke="#f2f2f2" stroke-width="2.6" stroke-linecap="round"/></svg>
<span class="t" style="left:1821px;top:803.5px;color:#000;letter-spacing:0.126px;">Thoát (Esc)</span>
<div id="bot0"></div><div id="bot1"></div><div id="bot2"></div>
<svg style="left:0;top:839px" width="1100" height="2" viewBox="0 839 1100 2"><rect x="173.7" y="839.4" width="1" height="1.6" fill="#333"/><rect x="336.0" y="839.4" width="1" height="1.6" fill="#333"/><rect x="351.4" y="839.4" width="1" height="1.6" fill="#333"/><rect x="467.5" y="839.4" width="2" height="1.6" fill="#333"/><rect x="476.5" y="839.4" width="2" height="1.6" fill="#333"/><rect x="491.0" y="839.4" width="1" height="1.6" fill="#333"/><rect x="518.5" y="839.4" width="1" height="1.6" fill="#333"/><rect x="601.3" y="839.4" width="1" height="1.6" fill="#333"/><rect x="613.2" y="839.4" width="1" height="1.6" fill="#333"/><rect x="683.0" y="839.4" width="2" height="1.6" fill="#333"/><rect x="699.7" y="839.4" width="2" height="1.6" fill="#333"/><rect x="728.0" y="839.4" width="2" height="1.6" fill="#333"/><rect x="746.0" y="839.4" width="2" height="1.6" fill="#333"/><rect x="754.0" y="839.4" width="2" height="1.6" fill="#333"/><rect x="811.0" y="839.4" width="1" height="1.6" fill="#333"/><rect x="837.0" y="839.4" width="1" height="1.6" fill="#333"/><rect x="843.0" y="839.4" width="1" height="1.6" fill="#333"/><rect x="908.0" y="839.4" width="1" height="1.6" fill="#333"/><rect x="973.4" y="839.4" width="1" height="1.6" fill="#333"/><rect x="997.0" y="839.4" width="1" height="1.6" fill="#333"/></svg>
<div class="" style="left:1896px;top:16px;width:1px;height:812px;background:#c4c4c4;"></div>
<div class="" style="left:1897px;top:0px;width:2px;height:841px;background:linear-gradient(#eceef0,#e6ecf2 40%,#e3ecf3 96%,#bfe0f3 99%);"></div>
<svg style="position:absolute;left:0;top:0;pointer-events:none" width="1899" height="841"><rect x="1069.7" y="763.7" width="152.9" height="73.7" fill="none" stroke="#ff0000" stroke-width="3.4" rx="1.2"/><line x1="1161.4" y1="607.2" x2="1113.5" y2="732" stroke="#f00" stroke-width="2.6" stroke-linecap="round"/><polygon points="1108.6,745.8 1108.9,729.5 1118.3,733.2" fill="#f00"/></svg>
</body></html>
